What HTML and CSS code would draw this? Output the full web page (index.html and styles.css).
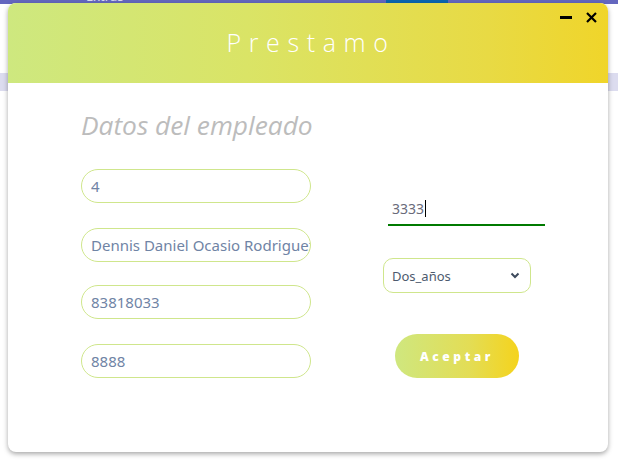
FILE: index.html
```html
<!DOCTYPE html>
<html lang="es">
<head>
<meta charset="utf-8">
<link rel="stylesheet" href="styles.css">
</head>
<body>
<div class="backdrop">
  <div class="topbar"><span class="topbar-text">Extras</span><span class="topbar-tab"></span></div>
  <div class="band"></div>
</div>
<div class="modal">
  <div class="modal-header">
    <h1 class="modal-title">Prestamo</h1>
    <div class="win-controls">
      <span class="win-min"></span>
      <svg class="win-close" width="11" height="11" viewBox="0 0 11 11"><path d="M1 1L10 10M10 1L1 10" stroke="#000" stroke-width="2.2"/></svg>
    </div>
  </div>
  <div class="modal-body">
    <div class="col-left">
      <h2 class="section-title">Datos del empleado</h2>
      <input class="pill" value="4">
      <input class="pill" value="Dennis Daniel Ocasio Rodriguez">
      <input class="pill" value="83818033">
      <input class="pill" value="8888">
    </div>
    <div class="col-right">
      <div class="line-field"><span class="line-value">3333</span><span class="caret"></span></div>
      <div class="select">
        <span class="select-value">Dos_años</span>
        <svg width="10" height="7" viewBox="0 0 10 7"><path d="M1.5 1.5L5 5L8.5 1.5" fill="none" stroke="#3d4a5c" stroke-width="2"/></svg>
      </div>
      <button class="btn-accept">Aceptar</button>
    </div>
  </div>
</div>
</body>
</html>
```
FILE: styles.css
```css
* { box-sizing: border-box; }
html, body { margin: 0; padding: 0; }
body {
  width: 618px;
  height: 462px;
  background: #ffffff;
  font-family: "Noto Sans", "Open Sans", sans-serif;
  position: relative;
  overflow: hidden;
}
.backdrop { position: absolute; inset: 0; }
.topbar {
  height: 4px;
  background: #6467bf;
  position: relative;
}
.topbar-text {
  position: absolute;
  left: 86px;
  top: -10px;
  font-size: 13px;
  line-height: 13px;
  color: #d9daf0;
}
.topbar-tab {
  position: absolute;
  left: 386px;
  width: 62px;
  top: 0;
  height: 4px;
  background: #0a66b0;
}
.band {
  position: absolute;
  top: 73px;
  left: 0;
  right: 0;
  height: 18px;
  background: #dcdcef;
}
.modal {
  position: absolute;
  left: 8px;
  top: 3px;
  width: 600px;
  height: 449px;
  background: #fff;
  border-radius: 8px;
  overflow: hidden;
  box-shadow: 0 2px 5px rgba(0,0,0,0.35);
  display: flex;
  flex-direction: column;
}
.modal-header {
  height: 80px;
  flex: none;
  background: linear-gradient(90deg, #cee87f 0%, #dae466 40%, #e8da44 80%, #f0d52a 100%);
  display: flex;
  align-items: center;
  justify-content: center;
  position: relative;
}
.modal-title {
  margin: 0;
  padding: 0 0 2px 6px;
  font-family: "Open Sans", sans-serif;
  font-weight: 300;
  font-size: 25px;
  letter-spacing: 7.6px;
  color: #ffffff;
}
.win-controls {
  position: absolute;
  top: 9px;
  right: 11px;
  display: flex;
  align-items: center;
  gap: 14px;
}
.win-min {
  width: 12px;
  height: 3px;
  background: #000;
  display: block;
}
.win-close { display: block; }
.modal-body {
  display: flex;
  padding: 25px 0 0 73px;
}
.col-left {
  width: 230px;
  display: flex;
  flex-direction: column;
}
.section-title {
  margin: 0 0 27px 0;
  font-family: "Open Sans", sans-serif;
  font-style: italic;
  font-weight: 400;
  font-size: 26.3px;
  line-height: 34px;
  color: #bcbcbc;
  white-space: nowrap;
}
.pill {
  width: 230px;
  height: 34px;
  border: 1px solid #cfe68c;
  border-radius: 17px;
  padding: 0 0 0 9px;
  font-family: "Noto Sans", sans-serif;
  font-size: 15px;
  color: #7084a5;
  outline: none;
  background: #fff;
  margin-bottom: 25px;
}
.pill:nth-of-type(2) { margin-bottom: 23px; }
.col-right {
  margin-left: 72px;
  padding-top: 82px;
  display: flex;
  flex-direction: column;
}
.line-field {
  margin-left: 5px;
  width: 157px;
  height: 36px;
  border-bottom: 2px solid #007a00;
  display: flex;
  align-items: flex-end;
  padding-left: 4px;
  padding-bottom: 6px;
}
.line-value {
  font-family: "Noto Sans", sans-serif;
  font-size: 14px;
  line-height: 19px;
  color: #6a6a7a;
}
.caret {
  width: 1px;
  height: 17px;
  background: #000;
  margin-left: 1px;
  margin-bottom: 1px;
}
.select {
  margin-top: 32px;
  width: 148px;
  height: 35px;
  border: 1px solid #cfe68c;
  border-radius: 10px;
  display: flex;
  align-items: center;
  justify-content: space-between;
  padding: 0 10px 0 8px;
}
.select-value {
  font-family: "Noto Sans", sans-serif;
  font-size: 13px;
  color: #4d5a6e;
}
.btn-accept {
  margin-top: 41px;
  margin-left: 12px;
  width: 124px;
  height: 44px;
  border: none;
  border-radius: 22px;
  background: linear-gradient(90deg, #cfe77f 0%, #e3dd55 60%, #f5d31c 100%);
  color: #fff;
  font-family: "Open Sans", sans-serif;
  font-weight: 800;
  font-size: 12px;
  letter-spacing: 3.6px;
  padding-left: 6px;
}
```
